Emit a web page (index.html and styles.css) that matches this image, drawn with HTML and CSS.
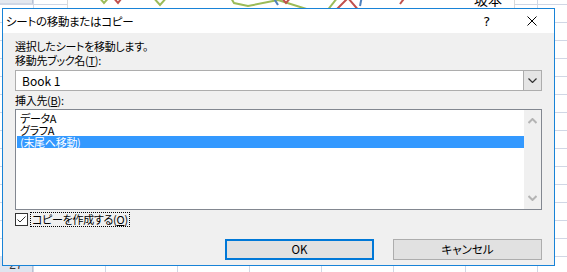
FILE: index.html
```html
<!DOCTYPE html>
<html>

<head>
	<title>シートの移動またはコピー</title>

	<link rel="stylesheet" href="styles.css">

</head>

<body>

	<div class="sheet">
		<div class="rowhead top">12</div>
		<div class="rowhead bottom">27</div>
		<div class="chart">
			<svg width="446" height="12" viewBox="0 0 446 12">
				<polyline points="30,-4 36,3 44,-6" fill="none" stroke="#9bbb59" stroke-width="2" />
				<polyline points="44,-4 50,3 56,-5" fill="none" stroke="#c0504d" stroke-width="2" />
				<polyline points="84,-4 92,5 100,-4" fill="none" stroke="#9bbb59" stroke-width="2" />
				<polyline points="163,-2 166,3 180,6 210,0 248,12" fill="none" stroke="#9bbb59" stroke-width="2" />
				<polyline points="205,-3 210,5" fill="none" stroke="#4f81bd" stroke-width="2" />
				<polyline points="212,-4 218,3 224,-4" fill="none" stroke="#c0504d" stroke-width="2" />
				<polyline points="258,12 270,-3" fill="none" stroke="#9bbb59" stroke-width="2" />
				<polyline points="266,12 280,-2 292,12" fill="none" stroke="#c0504d" stroke-width="2" />
				<polyline points="294,-4 292,6" fill="none" stroke="#4f81bd" stroke-width="2" />
				<polyline points="332,4 338,-4" fill="none" stroke="#c0504d" stroke-width="2" />
			</svg>
			<span class="legend">坂本</span>
		</div>
	</div>

	<div class="dialog">
		<div class="titlebar">
			<span class="title">シートの移動またはコピー</span>
			<span class="tbtn">?</span>
			<span class="tbtn close">
				<svg width="10" height="10" viewBox="0 0 10 10">
					<path d="M0.5 0.5 L9.5 9.5 M9.5 0.5 L0.5 9.5" stroke="#000" stroke-width="1" />
				</svg>
			</span>
		</div>

		<div class="content">
			<div class="label">選択したシートを移動します。</div>
			<div class="label">移動先ブック名(<u>T</u>):</div>

			<div class="combo">
				<span class="combo-text">Book 1</span>
				<span class="combo-btn">
					<svg width="9" height="5" viewBox="0 0 9 5">
						<path d="M0.5 0.5 L4.5 4.5 L8.5 0.5" fill="none" stroke="#333" stroke-width="1.2" />
					</svg>
				</span>
			</div>

			<div class="label insert">挿入先(<u>B</u>):</div>

			<div class="listbox">
				<div class="items">
					<div class="item">データA</div>
					<div class="item">グラフA</div>
					<div class="item selected">(末尾へ移動)</div>
				</div>
				<div class="scrollbar">
					<svg width="9" height="6" viewBox="0 0 9 6">
						<path d="M0.5 5 L4.5 1 L8.5 5" fill="none" stroke="#b4b4b4" stroke-width="2" />
					</svg>
					<svg width="9" height="6" viewBox="0 0 9 6">
						<path d="M0.5 1 L4.5 5 L8.5 1" fill="none" stroke="#b4b4b4" stroke-width="2" />
					</svg>
				</div>
			</div>

			<div class="checkrow">
				<span class="checkbox">
					<svg width="11" height="11" viewBox="0 0 11 11">
						<path d="M1.5 5.5 L4 8 L9.5 2.5" fill="none" stroke="#333" stroke-width="1" />
					</svg>
				</span>
				<span class="checklabel">コピーを作成する(<u>O</u>)</span>
			</div>

			<div class="buttons">
				<button class="btn default">OK</button>
				<button class="btn">キャンセル</button>
			</div>
		</div>
	</div>

</body>

</html>
```

FILE: styles.css
```css
body {
	margin: 0;
	width: 567px;
	height: 272px;
	overflow: hidden;
	font-family: "Noto Sans CJK JP", "Noto Sans", sans-serif;
	font-size: 11px;
	letter-spacing: -0.3px;
	font-feature-settings: "palt";
	position: relative;
}

.sheet {
	position: absolute;
	left: 0;
	top: 0;
	width: 567px;
	height: 272px;
	background-color: #fff;
	background-image:
		linear-gradient(to right, #d0d7e5 1px, transparent 1px),
		linear-gradient(to bottom, #d0d7e5 1px, transparent 1px);
	background-size: 72px 100%, 100% 18px;
	background-position: 33px 0, 0 4px;
}

.rowhead {
	position: absolute;
	left: 0;
	width: 33px;
	height: 18px;
	background: #e4e8ef;
	border-right: 1px solid #b8c2d2;
	border-bottom: 1px solid #d0d7e5;
	box-sizing: border-box;
	text-align: center;
	font-family: "Liberation Sans", sans-serif;
	font-size: 12px;
	letter-spacing: 0;
	line-height: 18px;
	color: #333;
}

.rowhead.top {
	top: -14px;
}

.rowhead.bottom {
	top: 256px;
	height: 20px;
	background: #dfe5ef;
}

.chart {
	position: absolute;
	left: 67px;
	top: 0;
	width: 446px;
	height: 12px;
	background: #fff;
	border-left: 1px solid #d9d9d9;
	border-right: 1px solid #d9d9d9;
}

.chart svg {
	display: block;
}

.legend {
	position: absolute;
	left: 406px;
	top: -9px;
	font-size: 14px;
	letter-spacing: 0;
	line-height: 16px;
	color: #000;
}

.dialog {
	position: absolute;
	left: 2px;
	top: 8px;
	width: 553px;
	height: 258px;
	box-sizing: border-box;
	border: 1px solid #1883d7;
	background: #f0f0f0;
	display: flex;
	flex-direction: column;
}

.titlebar {
	height: 24px;
	background: #fff;
	display: flex;
	align-items: center;
}

.title {
	flex: 1;
	padding-left: 3px;
	line-height: 24px;
	font-size: 11.5px;
	color: #000;
}

.tbtn {
	width: 45px;
	height: 24px;
	display: flex;
	align-items: center;
	justify-content: center;
	font-family: "DejaVu Sans", sans-serif;
	font-size: 13px;
	color: #000;
}

.content {
	padding: 6px 12px 0 12px;
	display: flex;
	flex-direction: column;
}

.label {
	line-height: 14px;
	height: 14px;
	color: #000;
}

.combo {
	margin-top: 3px;
	height: 21px;
	box-sizing: border-box;
	border: 1px solid #adadad;
	background: #fff;
	display: flex;
	align-items: stretch;
}

.combo-text {
	flex: 1;
	padding-left: 6px;
	line-height: 19px;
	font-size: 12px;
	letter-spacing: 0;
}

.combo-btn {
	width: 17px;
	background: #e5e5e5;
	border-left: 1px solid #adadad;
	display: flex;
	align-items: center;
	justify-content: center;
}

.label.insert {
	margin-top: 2px;
	height: 15px;
	line-height: 15px;
}

.listbox {
	margin-top: 1px;
	height: 101px;
	box-sizing: border-box;
	border: 1px solid #828790;
	background: #fff;
	display: flex;
}

.items {
	flex: 1;
	padding: 2px 0 0 1px;
}

.item {
	height: 12px;
	line-height: 12px;
	padding-left: 3px;
	color: #000;
}

.item.selected {
	background: #3399ff;
	color: #fff;
}

.scrollbar {
	width: 17px;
	background: #f0f0f0;
	display: flex;
	flex-direction: column;
	justify-content: space-between;
	align-items: center;
	padding: 8px 0 8px 0;
}

.scrollbar svg {
	display: block;
}

.checkrow {
	margin-top: 2px;
	height: 15px;
	display: flex;
	align-items: center;
	gap: 2px;
}

.checkbox {
	width: 13px;
	height: 13px;
	box-sizing: border-box;
	border: 1px solid #333;
	background: #fff;
	display: flex;
	align-items: center;
	justify-content: center;
}

.checklabel {
	border: 1px dotted #000;
	line-height: 13px;
	padding: 0 1px;
}

.buttons {
	margin-top: 12px;
	display: flex;
	justify-content: flex-end;
	gap: 19px;
}

.btn {
	width: 149px;
	height: 21px;
	box-sizing: border-box;
	border: 1px solid #adadad;
	background: #e1e1e1;
	font-family: "Noto Sans CJK JP", "Noto Sans", sans-serif;
	font-size: 11.5px;
	font-feature-settings: "palt";
	color: #000;
	padding: 0;
	line-height: 17px;
}

.btn.default {
	border: 2px solid #0078d7;
}
```
